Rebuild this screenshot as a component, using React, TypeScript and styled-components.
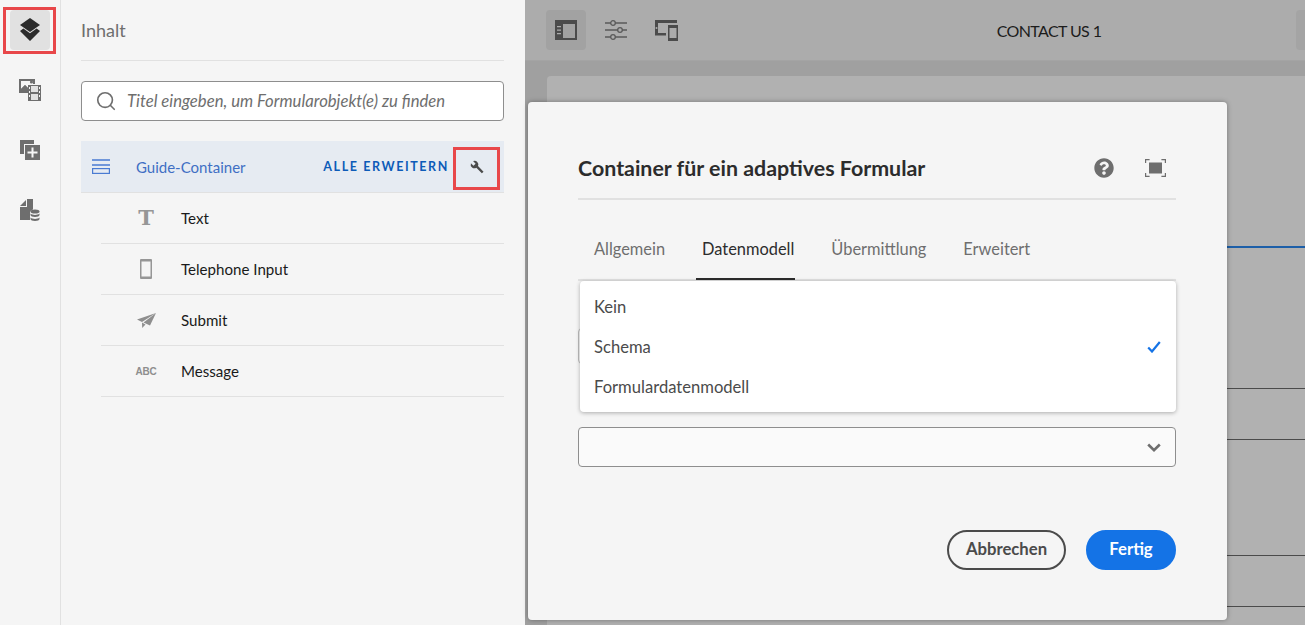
import React from 'react';
import styled, { createGlobalStyle } from 'styled-components';
import { Search } from 'lucide-react';
import { FaQuestionCircle } from 'react-icons/fa';

const GlobalStyle = createGlobalStyle`
  html, body {
    margin: 0;
    height: 100%;
    overflow: hidden;
    background: #f5f5f5;
    font-family: "Lato", "Liberation Sans", sans-serif;
  }
  * { box-sizing: border-box; }
`;

const Page = styled.div`
  position: relative;
  display: flex;
  width: 1305px;
  height: 625px;
  overflow: hidden;
`;

const Rail = styled.nav`
  width: 61px;
  flex-shrink: 0;
  display: flex;
  flex-direction: column;
  align-items: center;
  gap: 20px;
  padding: 10px 1px 0 0;
  border-right: 1px solid #e1e1e1;
  background: #f5f5f5;
`;

const RailButton = styled.div<{ $active?: boolean }>`
  position: relative;
  width: 40px;
  height: 40px;
  display: flex;
  align-items: center;
  justify-content: center;
  border-radius: 4px;
  background: ${(p) => (p.$active ? '#e1e1e1' : 'transparent')};
`;

const RailHighlight = styled.span`
  position: absolute;
  left: -7px;
  top: -3px;
  width: 53px;
  height: 47px;
  border: 3px solid #e8474a;
`;

const Panel = styled.aside`
  width: 464px;
  flex-shrink: 0;
  padding: 0 21px 0 20px;
  background: #f5f5f5;
`;

const PanelTitle = styled.h2`
  margin: 0;
  height: 61px;
  padding-top: 20px;
  border-bottom: 1px solid #e1e1e1;
  font-size: 18px;
  line-height: 20px;
  font-weight: 400;
  color: #6e6e6e;
`;

const SearchBox = styled.div`
  display: flex;
  align-items: center;
  gap: 10px;
  height: 40px;
  margin-top: 20px;
  padding-left: 13px;
  background: #fff;
  border: 1px solid #8e8e8e;
  border-radius: 4px;
  color: #6e6e6e;
`;

const SearchHint = styled.span`
  font-size: 16.7px;
  font-style: italic;
  color: #6e6e6e;
`;

const RootRow = styled.div`
  display: flex;
  align-items: center;
  height: 52px;
  margin-top: 20px;
  padding: 0 4px 0 11px;
  background: #e6ebf2;
  border-bottom: 1px solid #e1e1e1;
`;

const RootLabel = styled.span`
  flex: 1;
  margin-left: 26px;
  font-size: 15px;
  color: #3f6fc4;
`;

const ExpandAll = styled.span`
  font-size: 12.5px;
  font-weight: 700;
  letter-spacing: 1.6px;
  color: #0d5bb8;
`;

const WrenchButton = styled.div`
  width: 47px;
  height: 43px;
  margin: 4px 0 0 4px;
  padding-bottom: 3px;
  display: flex;
  align-items: center;
  justify-content: center;
  border: 3px solid #e8474a;
`;

const ChildList = styled.ul`
  list-style: none;
  margin: 0 0 0 20px;
  padding: 0;
`;

const ChildRow = styled.li`
  display: flex;
  align-items: center;
  height: 51px;
  padding-left: 25px;
  border-bottom: 1px solid #e1e1e1;
`;

const ChildIcon = styled.span`
  width: 40px;
  margin-right: 15px;
  display: flex;
  align-items: center;
  justify-content: center;
  color: #8e8e8e;
`;

const SerifGlyph = styled.span`
  font-family: "DejaVu Serif", "Liberation Serif", serif;
  font-weight: 700;
  font-size: 21px;
  line-height: 20px;
  color: #969696;
`;

const AbcGlyph = styled.span`
  font-family: "Liberation Sans", sans-serif;
  font-weight: 700;
  font-size: 10px;
  letter-spacing: -0.3px;
`;

const ChildLabel = styled.span`
  font-size: 15.1px;
  color: #1a1a1a;
`;

const Workspace = styled.main`
  flex: 1;
  min-width: 0;
  display: flex;
  flex-direction: column;
  background: #a0a0a0;
  overflow: hidden;
`;

const Toolbar = styled.header`
  height: 60px;
  flex-shrink: 0;
  display: flex;
  align-items: center;
  gap: 10px;
  padding-left: 21px;
  background: #acacac;
`;

const ToolButton = styled.div<{ $active?: boolean }>`
  width: 40px;
  height: 40px;
  flex-shrink: 0;
  display: flex;
  align-items: center;
  justify-content: center;
  border-radius: 4px;
  background: ${(p) => (p.$active ? '#a2a2a2' : 'transparent')};
`;

const DocTitle = styled.div`
  flex: 1;
  padding-left: 116px;
  text-align: center;
  font-size: 16px;
  letter-spacing: -0.6px;
  color: #1c1c1c;
`;

const EdgeButton = styled(ToolButton)`
  margin-right: -31px;
  background: #a4a4a4;
`;

const Canvas = styled.div`
  flex: 1;
  display: flex;
  padding: 16px 0 0 22px;
  box-shadow: inset 0 1px 0 #a4a4a4;
`;

const Sheet = styled.div`
  flex: 1;
  padding: 170px 0 0 7px;
  background: #b1b1b1;
  border-radius: 4px 0 0 0;
`;

const SelectedBlock = styled.div`
  border-top: 2px solid #1d5fa8;
  border-left: 3px solid #1d5fa8;
`;

const SheetRow = styled.div<{ $height: number }>`
  height: ${(p) => p.$height}px;
  border-bottom: 1px solid #4b4b4b;
`;

const Modal = styled.section`
  position: absolute;
  left: 528px;
  top: 102px;
  width: 699px;
  height: 518px;
  padding: 0 51px 0 50px;
  background: #f5f5f5;
  border-radius: 4px;
  box-shadow: 0 0 5px rgba(0, 0, 0, 0.35);
`;

const ModalHeader = styled.div`
  display: flex;
  align-items: center;
  height: 98px;
  padding-top: 36px;
  border-bottom: 2px solid #e1e1e1;
`;

const ModalTitle = styled.h1`
  flex: 1;
  margin: 0;
  font-size: 21.4px;
  font-weight: 700;
  color: #2c2c2c;
`;

const HeaderIcons = styled.div`
  display: flex;
  align-items: center;
  gap: 31px;
  padding-right: 10px;
  color: #6e6e6e;
`;

const Tabs = styled.div`
  display: flex;
  gap: 37px;
  height: 81px;
  padding: 18px 0 0 16px;
  border-bottom: 2px solid #e1e1e1;
`;

const Tab = styled.div<{ $active?: boolean }>`
  position: relative;
  display: flex;
  align-items: center;
  font-size: 16.4px;
  color: ${(p) => (p.$active ? '#2c2c2c' : '#6e6e6e')};

  &::after {
    content: '';
    display: ${(p) => (p.$active ? 'block' : 'none')};
    position: absolute;
    left: -6px;
    right: -1px;
    bottom: -1px;
    height: 2px;
    background: #2c2c2c;
  }
`;

const FormArea = styled.div`
  position: relative;
  display: flow-root;
`;

const HiddenSelect = styled.div`
  height: 36px;
  margin-top: 47px;
  background: #fafafa;
  border: 1px solid #bcbcbc;
  border-radius: 4px;
`;

const Select = styled.div`
  display: flex;
  align-items: center;
  justify-content: flex-end;
  height: 40px;
  margin-top: 63px;
  padding-right: 14px;
  background: #fafafa;
  border: 1px solid #8e8e8e;
  border-radius: 4px;
`;

const Menu = styled.ul`
  position: absolute;
  left: 2px;
  right: 0;
  top: 0;
  margin: 0;
  padding: 6px 0 5px;
  list-style: none;
  background: #fff;
  border-radius: 4px;
  box-shadow: 0 1px 4px rgba(0, 0, 0, 0.3);
`;

const MenuItem = styled.li`
  display: flex;
  align-items: center;
  justify-content: space-between;
  height: 40px;
  padding: 0 15px 0 14px;
  font-size: 16.6px;
  color: #4b4b4b;
`;

const Footer = styled.div`
  display: flex;
  justify-content: flex-end;
  gap: 20px;
  margin-top: 63px;
`;

const Button = styled.button<{ $primary?: boolean }>`
  height: 40px;
  padding: 0 0 2px;
  width: ${(p) => (p.$primary ? '90px' : '119px')};
  border-radius: 20px;
  border: 2px solid ${(p) => (p.$primary ? '#1473e6' : '#4b4b4b')};
  background: ${(p) => (p.$primary ? '#1473e6' : 'transparent')};
  color: ${(p) => (p.$primary ? '#fff' : '#4b4b4b')};
  font-family: inherit;
  font-size: 16.7px;
  font-weight: 700;
`;

const LayersIcon = () => (
  <svg width="20" height="24" viewBox="0 0 20 24" fill="#2c2c2c">
    <path d="M10 0 20 7 10 14 0 7Z" />
    <path d="M3.4 11.6 10 16.2l6.6-4.6L20 14 10 24 0 14Z" transform="translate(0 -1)" />
  </svg>
);

const MediaIcon = () => (
  <svg width="24" height="24" viewBox="0 0 24 24" fill="#6e6e6e">
    <path d="M1 1h16v5H10v9H1Z" />
    <path d="M3 3v8l4-4 3 3V6h5V3Z" fill="#f5f5f5" />
    <circle cx="13.5" cy="4" r="1.6" />
    <path d="M3 11 7 7l3 3v3H3Z" />
    <path d="M10 7h13v16H10Z" />
    <path d="M13 8h7v6h-7ZM13 16h7v6h-7Z" fill="#e1e1e1" />
    <path d="M11 9h1v2h-1ZM11 13h1v2h-1ZM11 17h1v2h-1ZM21 9h1v2h-1ZM21 13h1v2h-1ZM21 17h1v2h-1Z" fill="#f5f5f5" />
  </svg>
);

const AddLayerIcon = () => (
  <svg width="22" height="22" viewBox="0 0 22 22" fill="#6e6e6e">
    <path d="M1 1h14v4H5v10H1Z" />
    <path d="M6 6h15v15H6Z" />
    <path d="M12.5 8.5h2v4h4v2h-4v4h-2v-4h-4v-2h4Z" fill="#f5f5f5" />
  </svg>
);

const DataDocIcon = () => (
  <svg width="20" height="22" viewBox="0 0 20 22" fill="#6e6e6e">
    <path d="M0 7 6 1v6Z" />
    <path d="M7 0h6v10.5c-2 .6-3 1.6-3 2.8V21H0V8h7Z" />
    <ellipse cx="15" cy="12.5" rx="4.5" ry="2" />
    <path d="M10.5 14.6c1 1 2.8 1.4 4.5 1.4s3.500-.4 4.500-1.400V16c0 1.100-2 2-4.500 2s-4.500-.9-4.500-2Z" />
    <path d="M10.500 18.600c1 1 2.800 1.400 4.500 1.400s3.500-.4 4.500-1.400V20c0 1.100-2 2-4.500 2s-4.500-.9-4.500-2Z" />
  </svg>
);

const TreeIcon = () => (
  <svg width="18" height="15" viewBox="0 0 18 15" fill="none" stroke="#4a7bd2">
    <path d="M0 1h18M0 6h18" strokeWidth="1.4" />
    <rect x=".6" y="9.600" width="16.800" height="4.800" strokeWidth="1.200" />
  </svg>
);

const WrenchIcon = () => (
  <svg width="14" height="14" viewBox="0 0 15 15" fill="#4b4b4b">
    <path d="M1 3.500 3.700 6.200 6 4 3.300 1.200A4 4 0 0 1 8.600 6.500L14.500 12.500 12.700 14.300 6.800 8.300A4 4 0 0 1 1 3.500Z" />
  </svg>
);

const PhoneIcon = () => (
  <svg width="12" height="20" viewBox="0 0 12 20" fill="#969696">
    <path d="M1 0h10a1 1 0 0 1 1 1v18a1 1 0 0 1-1 1H1a1 1 0 0 1-1-1V1a1 1 0 0 1 1-1Zm.5 2.500v15h9v-15Z" fillRule="evenodd" />
  </svg>
);

const PlaneIcon = () => (
  <svg width="19" height="15" viewBox="0 0 19 15" fill="#8e8e8e">
    <path d="M19 0 0 6.500l5 2.500Z" />
    <path d="M19 0 6.500 9.500l6.500 3Z" />
    <path d="M5 9.500 5.200 15 8.500 11.500Z" />
  </svg>
);

const PanelIcon = () => (
  <svg width="22" height="20" viewBox="0 0 22 20" fill="#4b4b4b">
    <path d="M0 0h22v20H0Zm8 4v14h12V4Z" fillRule="evenodd" />
    <path d="M2 6h4v1.200H2ZM2 9.500h4v1.200H2ZM2 13h4v1.200H2Z" fill="#acacac" />
  </svg>
);

const SlidersIcon = () => (
  <svg width="22" height="20" viewBox="0 0 22 20" fill="none" stroke="#5a5a5a" strokeWidth="1.300">
    <path d="M0 3h6M10 3h12M0 10h13M17 10h5M0 17h6M10 17h12" />
    <circle cx="8" cy="3" r="2.300" />
    <circle cx="15" cy="10" r="2.300" />
    <circle cx="8" cy="17" r="2.300" />
  </svg>
);

const DevicesIcon = () => (
  <svg width="23" height="22" viewBox="0 0 23 22" fill="#4b4b4b">
    <path d="M0 1h22v3H3v10h8v2.500H0Z" />
    <path d="M13 6h10v16H13Zm1.500 3v10h7V9Z" fillRule="evenodd" />
    <circle cx="1.500" cy="9" r="1" fill="#acacac" />
  </svg>
);

const FocusIcon = () => (
  <svg width="21" height="18" viewBox="0 0 21 18" fill="none" stroke="#6e6e6e" strokeWidth="1.200">
    <path d="M.6 4V.6h4M16.400.6h4V4M.6 14v3.400h4M16.400 17.400h4V14" />
    <rect x="4" y="3.500" width="13" height="11" fill="#6e6e6e" stroke="none" />
  </svg>
);

const CheckIcon = () => (
  <svg width="14" height="12" viewBox="0 0 14 12" fill="none" stroke="#1473e6" strokeWidth="2.200">
    <path d="M1.200 6.500 5 10.500 12.800 1" />
  </svg>
);

const ChevronIcon = () => (
  <svg width="14" height="9" viewBox="0 0 14 9" fill="none" stroke="#6e6e6e" strokeWidth="2.600">
    <path d="M1.200 1.500 7 7.200l5.800-5.700" />
  </svg>
);

const children = [
  { label: 'Text', icon: <SerifGlyph>T</SerifGlyph> },
  { label: 'Telephone Input', icon: <PhoneIcon /> },
  { label: 'Submit', icon: <PlaneIcon /> },
  { label: 'Message', icon: <AbcGlyph>ABC</AbcGlyph> },
];

const tabs = ['Allgemein', 'Datenmodell', 'Übermittlung', 'Erweitert'];
const sheetRows = [140, 50, 115, 50];

export default function App() {
  return (
    <Page>
      <GlobalStyle />
      <Rail>
        <RailButton $active>
          <LayersIcon />
          <RailHighlight />
        </RailButton>
        <RailButton><MediaIcon /></RailButton>
        <RailButton><AddLayerIcon /></RailButton>
        <RailButton><DataDocIcon /></RailButton>
      </Rail>

      <Panel>
        <PanelTitle>Inhalt</PanelTitle>
        <SearchBox>
          <Search size={22} strokeWidth={1.8} />
          <SearchHint>Titel eingeben, um Formularobjekt(e) zu finden</SearchHint>
        </SearchBox>
        <RootRow>
          <TreeIcon />
          <RootLabel>Guide-Container</RootLabel>
          <ExpandAll>ALLE ERWEITERN</ExpandAll>
          <WrenchButton><WrenchIcon /></WrenchButton>
        </RootRow>
        <ChildList>
          {children.map((c) => (
            <ChildRow key={c.label}>
              <ChildIcon>{c.icon}</ChildIcon>
              <ChildLabel>{c.label}</ChildLabel>
            </ChildRow>
          ))}
        </ChildList>
      </Panel>

      <Workspace>
        <Toolbar>
          <ToolButton $active><PanelIcon /></ToolButton>
          <ToolButton><SlidersIcon /></ToolButton>
          <ToolButton><DevicesIcon /></ToolButton>
          <DocTitle>CONTACT US 1</DocTitle>
          <EdgeButton />
        </Toolbar>
        <Canvas>
          <Sheet>
            <SelectedBlock>
              {sheetRows.map((h, i) => (
                <SheetRow key={i} $height={h + 1} />
              ))}
            </SelectedBlock>
          </Sheet>
        </Canvas>
      </Workspace>

      <Modal>
        <ModalHeader>
          <ModalTitle>Container für ein adaptives Formular</ModalTitle>
          <HeaderIcons>
            <FaQuestionCircle size={20} />
            <FocusIcon />
          </HeaderIcons>
        </ModalHeader>
        <Tabs>
          {tabs.map((t) => (
            <Tab key={t} $active={t === 'Datenmodell'}>{t}</Tab>
          ))}
        </Tabs>
        <FormArea>
          <HiddenSelect />
          <Select><ChevronIcon /></Select>
          <Menu>
            <MenuItem>Kein</MenuItem>
            <MenuItem>Schema<CheckIcon /></MenuItem>
            <MenuItem>Formulardatenmodell</MenuItem>
          </Menu>
        </FormArea>
        <Footer>
          <Button>Abbrechen</Button>
          <Button $primary>Fertig</Button>
        </Footer>
      </Modal>
    </Page>
  );
}
